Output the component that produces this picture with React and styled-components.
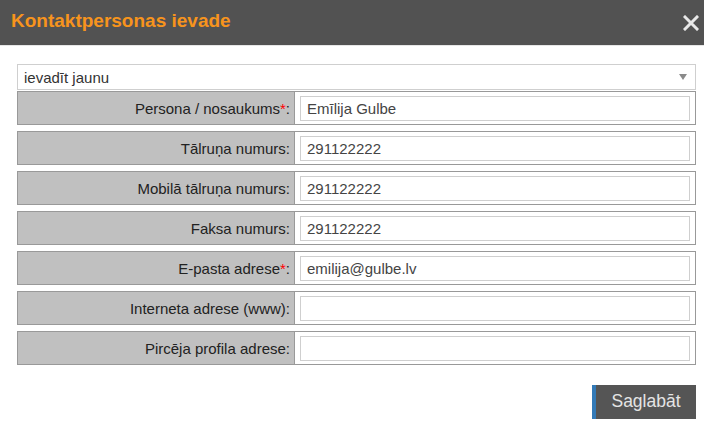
import React from "react";
import styled, { createGlobalStyle } from "styled-components";

const GlobalStyle = createGlobalStyle`
  html, body {
    margin: 0;
    padding: 0;
    background: #fff;
    font-family: "Liberation Sans", Arial, sans-serif;
  }
`;

const fields = [
  { label: "Persona / nosaukums", required: true, value: "Emīlija Gulbe" },
  { label: "Tālruņa numurs", value: "291122222" },
  { label: "Mobilā tālruņa numurs", value: "291122222" },
  { label: "Faksa numurs", value: "291122222" },
  { label: "E-pasta adrese", required: true, value: "emilija@gulbe.lv" },
  { label: "Interneta adrese (www)", value: "" },
  { label: "Pircēja profila adrese", value: "" },
];

const App = () => {
  return (
    <Dialog>
      <GlobalStyle />
      <Header>
        <Title>Kontaktpersonas ievade</Title>
        <Close aria-label="close">
          <svg width="16" height="16" viewBox="0 0 16 16">
            <path
              d="M2 2 L14 14 M14 2 L2 14"
              stroke="#e8e8e8"
              strokeWidth="3"
              strokeLinecap="square"
            />
          </svg>
        </Close>
      </Header>
      <Body>
        <Select>
          <span>ievadīt jaunu</span>
          <Arrow />
        </Select>
        <Rows>
          {fields.map((f) => (
            <Row key={f.label}>
              <Label>
                {f.label}
                {f.required && <Star>*</Star>}:
              </Label>
              <InputCell>
                <Input defaultValue={f.value} />
              </InputCell>
            </Row>
          ))}
        </Rows>
        <Footer>
          <SaveButton>Saglabāt</SaveButton>
        </Footer>
      </Body>
    </Dialog>
  );
};

const Dialog = styled.div`
  width: 704px;
  height: 428px;
  background: #fff;
  overflow: hidden;
`;

const Header = styled.div`
  height: 46px;
  background: #525252;
  border-bottom: 1px solid #e6e6e6;
  display: flex;
  align-items: center;
  justify-content: space-between;
  padding: 0 5px 3px 11px;
  box-sizing: border-box;
`;

const Title = styled.h1`
  margin: 0;
  font-size: 19px;
  font-weight: bold;
  color: #f7941d;
`;

const Close = styled.span`
  display: flex;
  width: 16px;
  height: 16px;
  margin-top: 3px;
`;

const Body = styled.div`
  padding: 18px 8px 0 17px;
`;

const Select = styled.div`
  height: 26px;
  border: 1px solid #cfcfcf;
  box-sizing: border-box;
  display: flex;
  align-items: center;
  justify-content: space-between;
  padding: 0 8px 0 6px;
  font-size: 15px;
  color: #333;
`;

const Arrow = styled.span`
  width: 0;
  height: 0;
  border-left: 4px solid transparent;
  border-right: 4px solid transparent;
  border-top: 6px solid #8a8a8a;
`;

const Rows = styled.div`
  display: flex;
  flex-direction: column;
  gap: 6px;
  margin-top: 1px;
`;

const Row = styled.div`
  display: grid;
  grid-template-columns: 277px 1fr;
  height: 34px;
  border: 1px solid #999;
  box-sizing: border-box;
`;

const Label = styled.div`
  background: #c0c0c0;
  border-right: 1px solid #999;
  display: flex;
  align-items: center;
  justify-content: flex-end;
  padding-right: 4px;
  font-size: 15px;
  color: #222;
`;

const Star = styled.span`
  color: #ff0000;
`;

const InputCell = styled.div`
  background: #fff;
  display: flex;
  align-items: center;
  padding: 0 5px;
`;

const Input = styled.input`
  width: 100%;
  height: 25px;
  box-sizing: border-box;
  border: 1px solid #cfcfcf;
  outline: none;
  padding: 0 6px;
  font-family: "Liberation Sans", Arial, sans-serif;
  font-size: 15px;
  color: #444;
`;

const Footer = styled.div`
  display: flex;
  justify-content: flex-end;
  margin-top: 20px;
`;

const SaveButton = styled.button`
  height: 34px;
  width: 104px;
  border: none;
  border-left: 4px solid #337ab7;
  background: #555;
  color: #e4e4e4;
  font-family: "Liberation Sans", Arial, sans-serif;
  font-size: 17.5px;
  padding: 0 0 2px 0;
  cursor: pointer;
`;

export default App;
